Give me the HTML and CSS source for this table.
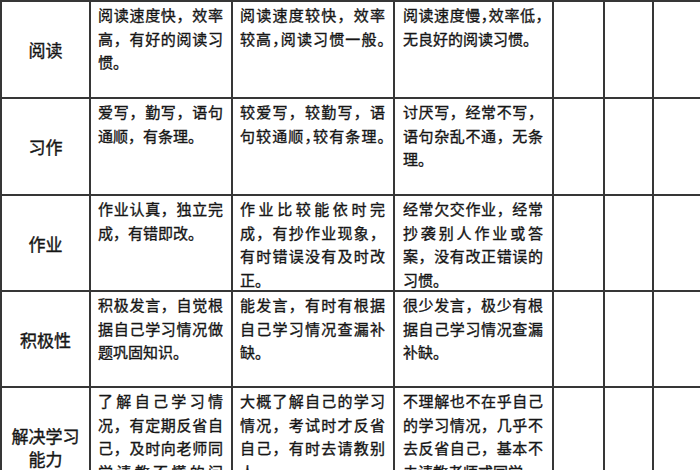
FILE: index.html
```html
<!DOCTYPE html>
<html lang="zh-CN">
<head>
<meta charset="utf-8">
<title>学习评价表</title>
<link rel="stylesheet" href="styles.css">
</head>
<body>
<div class="tbl">
  <div class="c lab">阅读</div>
  <div class="c txt t2"><div class="j">阅读速度快，效率</div><div class="j">高，有好的阅读习</div><div>惯。</div></div>
  <div class="c txt t3"><div class="j">阅读速度较快，效率</div><div class="j h">较高，阅读习惯一般。</div></div>
  <div class="c txt t4"><div class="j h">阅读速度慢，效率低，</div><div>无良好的阅读习惯。</div></div>
  <div class="c"></div><div class="c"></div><div class="c"></div>

  <div class="c lab">习作</div>
  <div class="c txt t2"><div class="j">爱写，勤写，语句</div><div>通顺，有条理。</div></div>
  <div class="c txt t3"><div class="j">较爱写，较勤写，语</div><div class="j h">句较通顺，较有条理。</div></div>
  <div class="c txt t4"><div class="j">讨厌写，经常不写，</div><div class="j">语句杂乱不通，无条</div><div>理。</div></div>
  <div class="c"></div><div class="c"></div><div class="c"></div>

  <div class="c lab">作业</div>
  <div class="c txt t2"><div class="j">作业认真，独立完</div><div>成，有错即改。</div></div>
  <div class="c txt t3"><div class="j">作业比较能依时完</div><div class="j">成，有抄作业现象，</div><div class="j">有时错误没有及时改</div><div>正。</div></div>
  <div class="c txt t4"><div class="j">经常欠交作业，经常</div><div class="j">抄袭别人作业或答</div><div class="j">案，没有改正错误的</div><div>习惯。</div></div>
  <div class="c"></div><div class="c"></div><div class="c"></div>

  <div class="c lab">积极性</div>
  <div class="c txt t2"><div class="j">积极发言，自觉根</div><div class="j">据自己学习情况做</div><div>题巩固知识。</div></div>
  <div class="c txt t3"><div class="j">能发言，有时有根据</div><div class="j">自己学习情况查漏补</div><div>缺。</div></div>
  <div class="c txt t4"><div class="j">很少发言，极少有根</div><div class="j">据自己学习情况查漏</div><div>补缺。</div></div>
  <div class="c"></div><div class="c"></div><div class="c"></div>

  <div class="c lab">解决学习<br>能力</div>
  <div class="c txt t2"><div class="j">了解自己学习情</div><div class="j">况，有定期反省自</div><div class="j">己，及时向老师同</div><div class="j">学请教不懂的问</div><div>题。</div></div>
  <div class="c txt t3"><div class="j">大概了解自己的学习</div><div class="j">情况，考试时才反省</div><div class="j">自己，有时去请教别</div><div>人。</div></div>
  <div class="c txt t4"><div class="j">不理解也不在乎自己</div><div class="j">的学习情况，几乎不</div><div class="j">去反省自己，基本不</div><div>去请教老师或同学。</div></div>
  <div class="c"></div><div class="c"></div><div class="c"></div>
</div>
</body>
</html>
```
FILE: styles.css
```css
html, body {
  margin: 0;
  padding: 0;
  background: #ffffff;
  overflow: hidden;
}

body {
  width: 700px;
  height: 470px;
  font-family: "Noto Sans CJK SC", "Noto Sans", sans-serif;
  color: #161616;
}

.tbl {
  display: grid;
  grid-template-columns: 87px 140px 160px 157px 49px 47px 47px;
  grid-template-rows: 95px 95px 94px 94px 117px;
  gap: 2px;
  padding: 2px;
  background: #363636;
  width: max-content;
}

.c {
  background: #ffffff;
  overflow: hidden;
}

.lab {
  display: flex;
  align-items: center;
  justify-content: center;
  text-align: center;
  font-size: 17px;
  line-height: 23px;
  -webkit-text-stroke: 0.4px #161616;
}

.txt {
  font-size: 15px;
  line-height: 23.5px;
  padding-top: 1px;
  -webkit-text-stroke: 0.35px #161616;
}

.t2 { padding-left: 7px; padding-right: 8px; }
.t3 { padding-left: 7px; padding-right: 8px; }
.t4 { padding-left: 8px; padding-right: 9px; }

.j {
  text-align: justify;
  text-align-last: justify;
}

.h {
  font-feature-settings: "halt";
}
```
